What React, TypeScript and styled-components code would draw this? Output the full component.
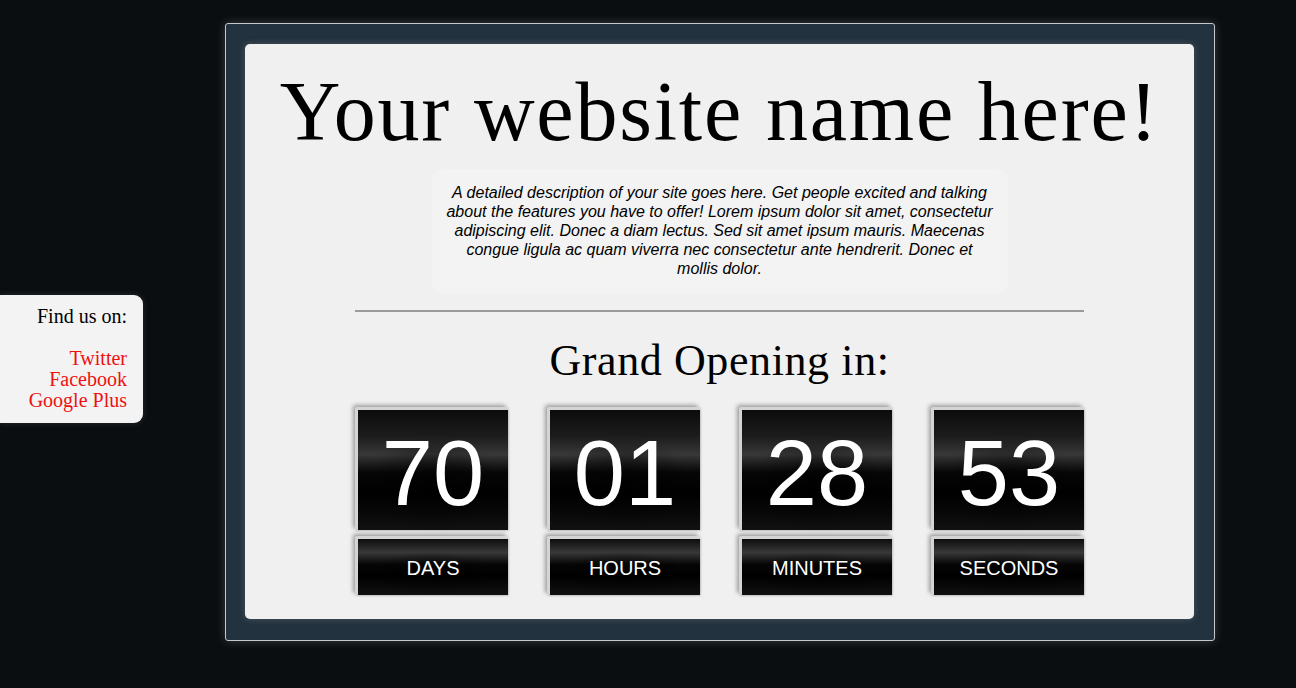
import React from "react";
import styled, { createGlobalStyle } from "styled-components";

const GlobalStyle = createGlobalStyle`
  html, body {
    margin: 0;
    padding: 0;
    background: #0a0e11;
    font-family: "Liberation Serif", serif;
  }
`;

const Page = styled.div`
  position: relative;
  min-height: 688px;
  padding-top: 23px;
  box-sizing: border-box;
`;

const Frame = styled.div`
  width: 949px;
  margin-left: 225px;
  padding: 20px 20px 21px 19px;
  background: #22323f;
  border: 1px solid #c6c9cc;
  border-radius: 3px;
  box-shadow: 0 0 10px rgba(150, 150, 150, 0.35);
`;

const Panel = styled.main`
  background: #f0f0f0;
  border-radius: 5px;
  padding: 20px 0 24px;
  display: flex;
  flex-direction: column;
  align-items: center;
  box-shadow: 0 0 6px rgba(200, 200, 200, 0.25);
`;

const Title = styled.h1`
  margin: 0;
  font-family: "Liberation Serif", serif;
  font-weight: normal;
  font-size: 84px;
  line-height: 96px;
  letter-spacing: 1.8px;
  color: #000;
`;

const Description = styled.p`
  width: 550px;
  margin: 9px 0 0;
  padding: 14px 13px 16px;
  background: #f3f3f3;
  border-radius: 12px;
  font-family: "Liberation Sans", sans-serif;
  font-style: italic;
  font-size: 16px;
  line-height: 19px;
  text-align: center;
  color: #000;
`;

const Rule = styled.hr`
  width: 729px;
  margin: 16px 0 0;
  border: 0;
  border-top: 2px solid #9a9a9a;
  height: 0;
`;

const Subtitle = styled.h2`
  margin: 26px 0 0;
  font-family: "Liberation Serif", serif;
  font-weight: normal;
  font-size: 44px;
  line-height: 46px;
  letter-spacing: 0.6px;
  color: #000;
`;

const Counters = styled.div`
  display: flex;
  gap: 39px;
  margin-top: 23px;
`;

const Unit = styled.div`
  display: flex;
  flex-direction: column;
  gap: 6px;
  width: 153px;
`;

const Tile = styled.div<{ $tall?: boolean }>`
  height: ${(p) => (p.$tall ? 123 : 59)}px;
  box-sizing: border-box;
  border-left: 3px solid #d4d4d4;
  border-top: 3px solid #d4d4d4;
  border-radius: 3px 3px 0 0;
  box-shadow: -2px -2px 4px rgba(0, 0, 0, 0.35), 1px 1px 2px rgba(0, 0, 0, 0.15);
  background:
    radial-gradient(ellipse 45% 40% at 50% 62%, rgba(0, 0, 0, 0.6), transparent),
    linear-gradient(
      to bottom,
      #0c0c0c 0%,
      #1c1c1c ${(p) => (p.$tall ? 22 : 8)}%,
      #383838 ${(p) => (p.$tall ? 37 : 24)}%,
      #060606 ${(p) => (p.$tall ? 52 : 45)}%,
      #000 ${(p) => (p.$tall ? 70 : 65)}%,
      #111 100%
    );
  display: flex;
  align-items: center;
  justify-content: center;
  color: #fff;
  font-family: "Liberation Sans", sans-serif;
  font-size: ${(p) => (p.$tall ? "92px" : "20px")};
  line-height: 1;
  padding-top: ${(p) => (p.$tall ? 6 : 2)}px;
`;

const Sidebar = styled.aside`
  position: absolute;
  left: 0;
  top: 295px;
  width: 127px;
  padding: 11px 16px 0 0;
  height: 117px;
  background: #f3f3f3;
  border-radius: 0 9px 9px 0;
  text-align: right;
  font-family: "Liberation Serif", serif;
  font-size: 20px;
  line-height: 21px;
  box-shadow: 0 0 6px rgba(120, 120, 120, 0.3);
`;

const SideHead = styled.div`
  color: #000;
  margin-bottom: 21px;
`;

const SideLink = styled.a`
  display: block;
  color: #ee1111;
  text-decoration: none;
`;

const counters = [
  { value: "70", label: "DAYS" },
  { value: "01", label: "HOURS" },
  { value: "28", label: "MINUTES" },
  { value: "53", label: "SECONDS" },
];

export default function App() {
  return (
    <Page>
      <GlobalStyle />
      <Sidebar>
        <SideHead>Find us on:</SideHead>
        <SideLink href="#">Twitter</SideLink>
        <SideLink href="#">Facebook</SideLink>
        <SideLink href="#">Google Plus</SideLink>
      </Sidebar>
      <Frame>
        <Panel>
          <Title>Your website name here!</Title>
          <Description>
            A detailed description of your site goes here. Get people excited
            and talking about the features you have to offer! Lorem ipsum dolor
            sit amet, consectetur adipiscing elit. Donec a diam lectus. Sed sit
            amet ipsum mauris. Maecenas congue ligula ac quam viverra nec
            consectetur ante hendrerit. Donec et mollis dolor.
          </Description>
          <Rule />
          <Subtitle>Grand Opening in:</Subtitle>
          <Counters>
            {counters.map((c) => (
              <Unit key={c.label}>
                <Tile $tall>{c.value}</Tile>
                <Tile>{c.label}</Tile>
              </Unit>
            ))}
          </Counters>
        </Panel>
      </Frame>
    </Page>
  );
}
